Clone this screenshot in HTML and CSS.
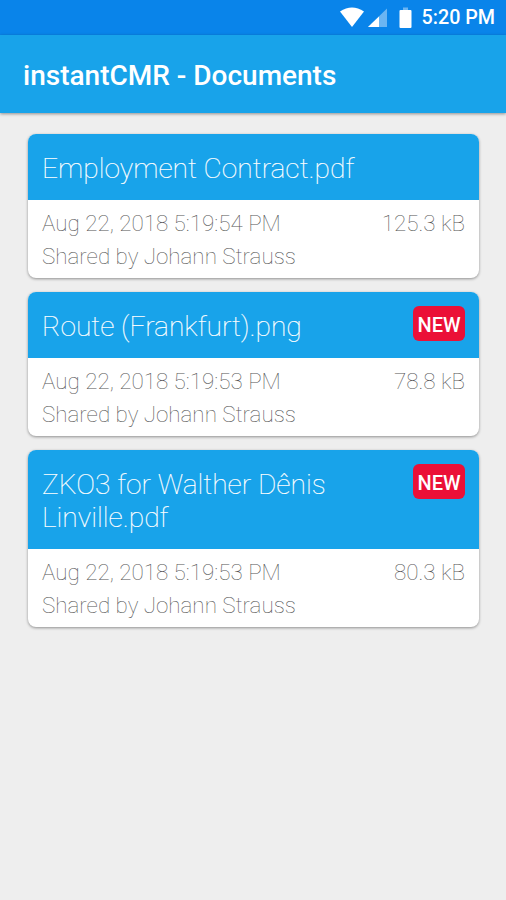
FILE: index.html
```html
<!DOCTYPE html>
<html lang="en">
<head>
    <meta charset="UTF-8">
    <meta name="viewport" content="width=device-width, initial-scale=1.0">
    <title>instantCMR - Documents</title>
    <link rel="stylesheet" href="styles.css">
</head>
<body>

<div class="status-bar">
    <svg class="status-icons" width="74" height="22" viewBox="0 0 74 22">
        <path d="M1 4.500Q13-3.500 25 4.500L13 20Z" fill="#fff"/>
        <path d="M48 1.500V20H29Z" fill="#fff" opacity=".4"/>
        <path d="M40 9.500V20H29Z" fill="#fff"/>
        <path d="M64 0.500h5v3h-5z" fill="#fff" opacity=".4"/>
        <rect x="60.500" y="3" width="12" height="18" rx="1" fill="#fff"/>
    </svg>
    <span class="clock">5:20 PM</span>
</div>

<header>
    <h1>instantCMR - Documents</h1>
</header>

<main>
    <article class="card">
        <div class="card-title">
            <h2>Employment Contract.pdf</h2>
        </div>
        <div class="card-info">
            <p><span>Aug 22, 2018 5:19:54 PM</span><span>125.3 kB</span></p>
            <p>Shared by Johann Strauss</p>
        </div>
    </article>

    <article class="card">
        <div class="card-title">
            <h2>Route (Frankfurt).png</h2>
            <span class="badge">NEW</span>
        </div>
        <div class="card-info">
            <p><span>Aug 22, 2018 5:19:53 PM</span><span>78.8 kB</span></p>
            <p>Shared by Johann Strauss</p>
        </div>
    </article>

    <article class="card">
        <div class="card-title">
            <h2>ZKO3 for Walther Dênis Linville.pdf</h2>
            <span class="badge">NEW</span>
        </div>
        <div class="card-info">
            <p><span>Aug 22, 2018 5:19:53 PM</span><span>80.3 kB</span></p>
            <p>Shared by Johann Strauss</p>
        </div>
    </article>
</main>

</body>
</html>
```
FILE: styles.css
```css
* { box-sizing: border-box; }
body { font-family: Roboto, sans-serif; margin: 0; min-height: 100vh; background: #eee; }
h1, h2, p { margin: 0; }

.status-bar { display: flex; justify-content: flex-end; align-items: center; gap: 9px; height: 35px; padding-right: 11px; background: #0984ea; color: white; }
.clock { font-size: 19.7px; font-weight: 500; line-height: 38px; }

header { display: flex; align-items: center; height: 78px; padding: 2px 23px 0; background: #18a3ea; color: white; box-shadow: 0 1px 3px rgba(0,0,0,0.4); }
h1 { font-size: 28px; font-weight: 500; }

main { display: flex; flex-direction: column; gap: 13.7px; padding: 21px 27px 21px 28px; }
.card { border-radius: 8px; background: white; overflow: hidden; box-shadow: 0 1px 3px rgba(0,0,0,0.4); }
.card-title { display: flex; justify-content: space-between; align-items: flex-start; padding: 18px 14px 14.6px; background: #18a3ea; color: white; }
h2 { font-size: 28.15px; font-weight: 100; line-height: 33px; -webkit-text-stroke: 0.2px white; }
.badge { flex: none; width: 52px; height: 35px; margin-top: -4px; border-radius: 6px; background: #eb1037; font-size: 20px; font-weight: 500; line-height: 38px; text-align: center; }
.card-info { padding: 7px 14px 5.7px; color: #555; font-size: 22.4px; font-weight: 100; line-height: 33px; }
.card-info p { display: flex; justify-content: space-between; }
```
